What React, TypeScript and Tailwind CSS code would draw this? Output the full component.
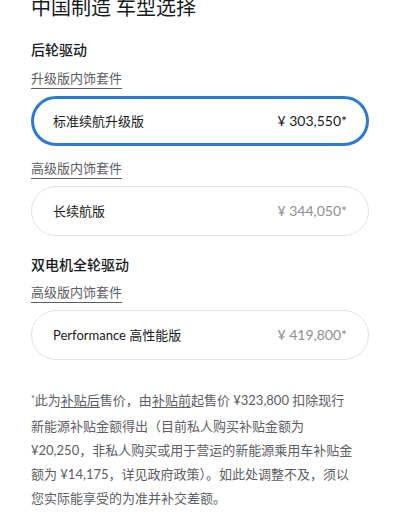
const font = "font-['Lato','Noto_Sans_CJK_SC',sans-serif]";

type Trim = {
  name: string;
  price: string;
  selected?: boolean;
};

function TrimCard({ name, price, selected }: Trim) {
  return (
    <div
      className={
        selected
          ? "mt-2 h-[50px] rounded-full border-[3px] border-[#2b7bd0] flex items-center justify-between px-[19px]"
          : "mt-2 h-[50px] rounded-full border border-[#e2e2e2] flex items-center justify-between px-[21px]"
      }
    >
      <span className="text-[13px] leading-5 text-[#171a20]">{name}</span>
      <span className={selected ? "text-[14px] leading-5 text-[#171a20]" : "text-[14px] leading-5 text-[#8e8e8e]"}>
        {price}
      </span>
    </div>
  );
}

function InteriorLink({ label, className }: { label: string; className?: string }) {
  return (
    <div className={`h-5 text-[13px] leading-5 ${className ?? ""}`}>
      <span className="text-[#5c5e62] underline decoration-[#5c5e62] underline-offset-[5px]">{label}</span>
    </div>
  );
}

export default function App() {
  return (
    <div className={`w-[400px] h-[512px] overflow-hidden bg-white px-[31px] ${font}`}>
      <h1 className="-mt-[7px] h-7 text-[20px] leading-7 font-normal text-[#171a20]">中国制造 车型选择</h1>

      {/* 后轮驱动 */}
      <h2 className="mt-[19px] h-5 text-[14px] leading-5 font-medium text-[#171a20]">后轮驱动</h2>
      <InteriorLink label="升级版内饰套件" className="mt-2" />
      <TrimCard name="标准续航升级版" price="¥ 303,550*" selected />

      <InteriorLink label="高级版内饰套件" className="mt-3" />
      <TrimCard name="长续航版" price="¥ 344,050*" />

      {/* 双电机全轮驱动 */}
      <h2 className="mt-[19px] h-5 text-[14px] leading-5 font-medium text-[#171a20]">双电机全轮驱动</h2>
      <InteriorLink label="高级版内饰套件" className="mt-[7px]" />
      <TrimCard name="Performance 高性能版" price="¥ 419,800*" />

      <p className="mt-[28px] w-[345px] text-[13px] leading-6 text-[#5c5e62]">
        <span className="relative -top-[3px] text-[9px]">*</span>此为<span className="underline underline-offset-2">补贴后</span>售价，由
        <span className="underline underline-offset-2">补贴前</span>起售价 ¥323,800 扣除现行
        <br />
        新能源补贴金额得出（目前私人购买补贴金额为
        <br />
        ¥20,250，非私人购买或用于营运的新能源乘用车补贴金
        <br />
        额为 ¥14,175，详见政府政策）。如此处调整不及，须以
        <br />
        您实际能享受的为准并补交差额。
      </p>
    </div>
  );
}
